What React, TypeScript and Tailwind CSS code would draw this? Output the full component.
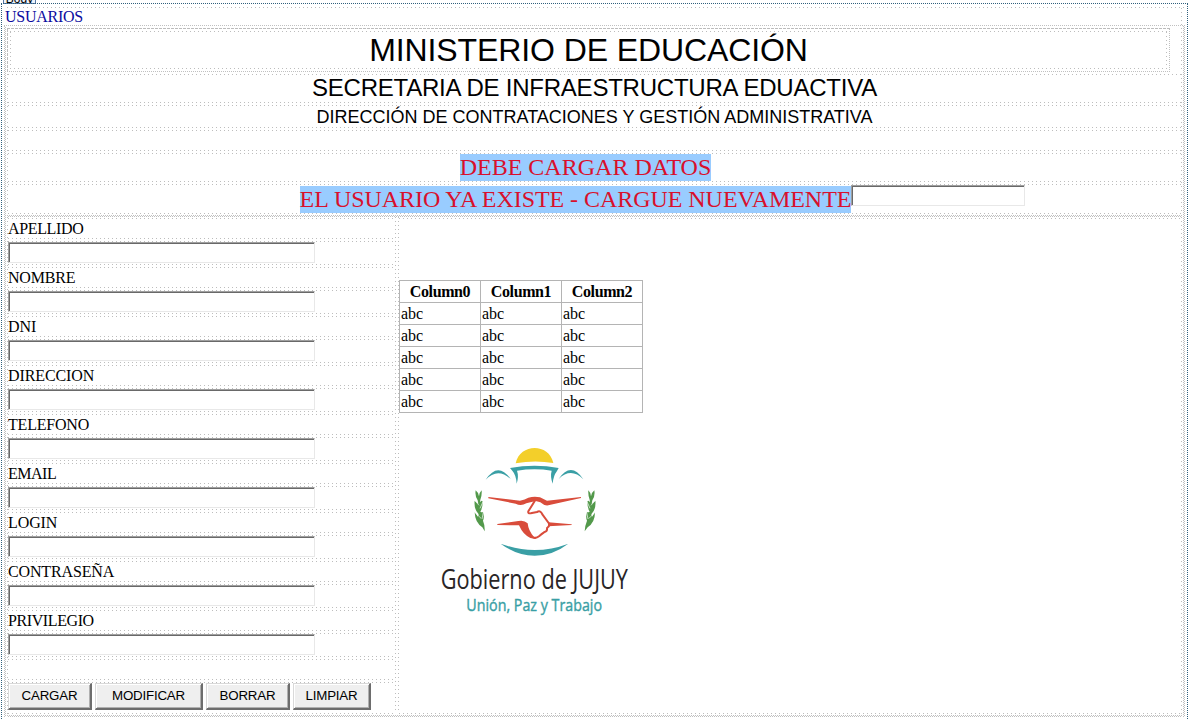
import React from "react";

const H = ({ className = "" }: { className?: string }) => (
  <div className={`h-px shrink-0 bg-[repeating-linear-gradient(90deg,#bdbdbd_0_1px,transparent_1px_4px)] ${className}`} />
);
const HDense = ({ className = "" }: { className?: string }) => (
  <div className={`h-px shrink-0 bg-[repeating-linear-gradient(90deg,#c0c0c0_0_1px,transparent_1px_2px)] ${className}`} />
);
const V = ({ className = "" }: { className?: string }) => (
  <div className={`w-px shrink-0 bg-[repeating-linear-gradient(180deg,#bdbdbd_0_1px,transparent_1px_4px)] ${className}`} />
);
const VDense = ({ className = "" }: { className?: string }) => (
  <div className={`w-px shrink-0 bg-[repeating-linear-gradient(180deg,#c0c0c0_0_1px,transparent_1px_2px)] ${className}`} />
);
const VBlue = () => (
  <div className="w-px shrink-0 bg-[repeating-linear-gradient(180deg,#2f5f7c_0_1px,transparent_1px_2px)]" />
);
const HChecker = () => (
  <div className="shrink-0">
    <HDense />
    <HDense className="ml-px" />
  </div>
);
const VChecker = () => (
  <div className="flex shrink-0">
    <VDense />
    <VDense className="mt-px" />
  </div>
);
const Pair = () => (
  <div className="flex shrink-0 flex-col gap-[2px]">
    <H />
    <H />
  </div>
);

const Field = ({ className = "" }: { className?: string }) => (
  <input
    className={`block shrink-0 border border-t-[#a0a0a0] border-r-[#e8e8e8] border-b-[#e8e8e8] border-l-[#a0a0a0] bg-white shadow-[inset_1px_1px_#696969] outline-none ${className}`}
  />
);

const fields = [
  { label: "APELLIDO", tracking: "tracking-[-0.35px]" },
  { label: "NOMBRE", tracking: "tracking-[-0.2px]" },
  { label: "DNI", tracking: "tracking-[-0.1px]" },
  { label: "DIRECCION", tracking: "tracking-[-0.1px]" },
  { label: "TELEFONO", tracking: "tracking-[-0.2px]" },
  { label: "EMAIL", tracking: "tracking-[-0.5px]" },
  { label: "LOGIN", tracking: "tracking-[-0.1px]" },
  { label: "CONTRASEÑA", tracking: "tracking-[-0.15px]" },
  { label: "PRIVILEGIO", tracking: "tracking-[-0.4px]" },
];
const buttons = [
  { label: "CARGAR", width: "w-[84px]" },
  { label: "MODIFICAR", width: "w-[108px]" },
  { label: "BORRAR", width: "w-[84px]" },
  { label: "LIMPIAR", width: "w-[78px]" },
];

function Logo() {
  return (
    <svg className="mt-[22px] ml-[31px] block" width="210" height="190" viewBox="0 0 630 570">
      <path d="M257 85C270 24 357 24 370 84Q314 74 257 85Z" fill="#f3cf2a" />
      <g fill="#3a9fa5">
        <path d="M240 99Q314 85 386 99L381 108Q370 122 368 146Q360 124 365 107Q314 99 261 107Q267 124 260 146Q258 120 248 109Z" />
        <path d="M167 134Q204 78 242 132Q203 96 167 134Z" />
        <path d="M386 132Q423 78 460 133Q423 96 386 132Z" />
        <path d="M212 326Q314 364 415 326Q368 362 314 362Q260 362 212 326Z" />
      </g>
      <g transform="translate(105 15)">
        <g fill="#d94c3b">
          <path d="M70 171L165 182Q180 179 190 173Q208 168 225 172L246 182L348 171V174L250 196Q238 198 226 187L212 183L184 190Q168 199 152 191L70 175Z" />
          <path d="M97 252L160 243Q177 239 188 250Q190 272 207 291L212 297L196 294Q174 284 162 256L97 255Z" />
          <path d="M250 247L320 253V255L250 259Z" />
        </g>
        <path d="M211 180L190 214Q188 221 197 220L216 216Q227 210 232 223L251 249Q256 258 246 264Q248 274 237 277Q230 282 222 289Q212 297 202 291" fill="none" stroke="#d94c3b" strokeWidth="6" strokeLinejoin="round" />
      </g>
      <g fill="#53994b">
        <path id="leaf-left" d="M137 166Q144 171 147 184Q149 171 155 166Q156 183 151 194L150 202Q155 194 158 200Q158 219 151 230Q156 233 159 231Q164 245 159 257Q165 271 164 289L157 277Q135 263 134 232L144 245L146 238Q131 222 134 197L145 207L143 196Q134 183 137 166Z" />
        <path d="M493 166Q486 171 483 184Q481 171 475 166Q474 183 479 194L480 202Q475 194 472 200Q472 219 479 230Q474 233 471 231Q466 245 471 257Q465 271 464 289L473 277Q495 263 495 232L486 245L484 238Q499 222 496 197L485 207L487 196Q496 183 493 166Z" />
      </g>
      <g fill="none" stroke="#fff" strokeWidth="2">
        <path d="M134 196L147 211M159 200L150 220M134 231L153 250M160 232L156 252" />
        <path d="M496 196L483 211M471 200L480 220M496 231L477 250M470 232L474 252" />
      </g>
      <text x="32" y="462" textLength="562" lengthAdjust="spacingAndGlyphs" fontFamily="Open Sans, Noto Sans, sans-serif" fontSize="80" fill="#292526">Gobierno de JUJUY</text>
      <text x="109" y="528" textLength="407" lengthAdjust="spacingAndGlyphs" fontFamily="Open Sans, Noto Sans, sans-serif" fontSize="50" fill="#3a9fa5" stroke="#3a9fa5" strokeWidth="1.2">Unión, Paz y Trabajo</text>
    </svg>
  );
}

export default function App() {
  return (
    <div className="flex h-[719px] w-[1188px] flex-col overflow-hidden bg-white font-['Liberation_Serif',serif] text-[16px] text-black">
      <div className="flex h-[3px] shrink-0 pl-[3px]">
        <div className="flex h-[4px] w-[33px] shrink-0 items-end justify-center overflow-hidden border-x border-b border-[#5679a5] bg-[#eef3fb] font-['Liberation_Sans',sans-serif] text-[12px] leading-[7px]">
          Body
        </div>
      </div>
      <div className="ml-px h-px shrink-0 bg-[repeating-linear-gradient(90deg,#2f5f7c_0_1px,transparent_1px_2px)]" />
      <div className="flex h-[715px] pl-px">
        <VBlue />
        <div className="mx-[2px] flex w-[1181px] shrink-0 flex-col pt-[3px]">
          <H className="ml-[3px]" />
          <div className="flex h-[17px] shrink-0 justify-between pl-px">
            <span className="leading-[18px] tracking-[-0.25px] text-[#0b0ba0]">USUARIOS</span>
            <V className="mr-[3px]" />
          </div>
          <HDense />
          <div className="flex h-[691px] shrink-0">
            <VChecker />
            <div className="mr-px ml-px flex w-[1175px] shrink-0 flex-col">
              <div className="flex justify-between pt-[2px]">
                <div className="flex h-[44px] w-[1163px] shrink-0 flex-col">
                  <div className="h-px bg-[repeating-linear-gradient(90deg,#bcbcbc_0_3px,transparent_3px_4px)]" />
                  <div className="flex h-[42px]">
                    <div className="w-px bg-[repeating-linear-gradient(180deg,#bcbcbc_0_3px,transparent_3px_4px)]" />
                    <div className="ml-[2px] flex grow flex-col pt-[2px]">
                      <H />
                      <div className="flex h-[36px] justify-between">
                        <V />
                        <h1 className="font-['Liberation_Sans',sans-serif] text-[32px] leading-[37px] tracking-[-0.1px]">MINISTERIO DE EDUCACIÓN</h1>
                        <V />
                      </div>
                      <H />
                    </div>
                    <VDense className="ml-[2px]" />
                  </div>
                  <HDense />
                </div>
                <V />
              </div>
              <div className="flex h-[142px] shrink-0 pt-[2px]">
                <V />
                <div className="flex w-[1173px] flex-col">
                  <H />
                  <div className="h-[27px] text-center font-['Liberation_Sans',sans-serif] text-[24px] leading-[25px] tracking-[-0.23px]">SECRETARIA DE INFRAESTRUCTURA EDUACTIVA</div>
                  <Pair />
                  <div className="h-[21px] text-center font-['Liberation_Sans',sans-serif] text-[18px] leading-[23px]">DIRECCIÓN DE CONTRATACIONES Y GESTIÓN ADMINISTRATIVA</div>
                  <Pair />
                  <div className="h-[19px]" />
                  <Pair />
                  <div className="flex h-[27px] justify-center pr-[18px] text-[24px] leading-[27px] text-[#d8102c]">
                    <span className="bg-[#99ccff]">DEBE CARGAR DATOS</span>
                  </div>
                  <Pair />
                  <div className="flex h-[28px] justify-center pl-[136px] text-[24px] leading-[27px] text-[#d8102c]">
                    <span className="mt-px h-[27px] bg-[#99ccff] tracking-[-0.05px]">EL USUARIO YA EXISTE - CARGUE NUEVAMENTE</span>
                    <Field className="h-[21px] w-[174px]" />
                  </div>
                  <H />
                </div>
                <V />
              </div>
              <div className="h-px shrink-0" />
              <HChecker />
              <div className="flex h-[498px] shrink-0">
                <V />
                <div className="flex w-[387px] shrink-0 flex-col pt-px">
                  <H />
                  {fields.map((f, i) => (
                    <div key={f.label} className="flex shrink-0 flex-col">
                      <div className={`h-[19px] leading-[20px] ${f.tracking}`}>{f.label}</div>
                      <Pair />
                      <Field className="h-[21px] w-[307px]" />
                      <div className="h-px" />
                      <Pair />
                      {i === 8 && <div className="h-[19px]" />}
                    </div>
                  ))}
                  <Pair />
                  <div className="flex gap-[3px]">
                    {buttons.map((b) => (
                      <button
                        key={b.label}
                        className={`h-[27px] shrink-0 border-t border-r-2 border-b-2 border-l border-t-[#d9d9d9] border-r-[#6d6d6d] border-b-[#6d6d6d] border-l-[#d9d9d9] bg-[#efefef] font-['Liberation_Sans',sans-serif] text-[13.33px] leading-[24px] tracking-[-0.2px] shadow-[inset_1px_1px_#fff,inset_-1px_-1px_#b0b0b0] ${b.width}`}
                      >
                        {b.label}
                      </button>
                    ))}
                  </div>
                  <H className="mt-auto mb-px" />
                </div>
                <V className="mb-[2px]" />
                <V className="mb-[2px] ml-[2px]" />
                <div className="flex w-[782px] shrink-0 flex-col">
                  <H className="mt-px" />
                  <table className="mt-[61px] w-[244px] table-fixed border-collapse border border-[#a0a0a0]">
                    <thead>
                      <tr className="h-[22px]">
                        {["Column0", "Column1", "Column2"].map((c) => (
                          <th key={c} className="border border-[#b4b4b4] p-0 text-[16px] leading-[21px] font-bold tracking-[-0.4px]">{c}</th>
                        ))}
                      </tr>
                    </thead>
                    <tbody>
                      {[0, 1, 2, 3, 4].map((r) => (
                        <tr key={r} className="h-[22px]">
                          {[0, 1, 2].map((c) => (
                            <td key={c} className="border border-[#b4b4b4] p-0 pl-px leading-[21px]">abc</td>
                          ))}
                        </tr>
                      ))}
                    </tbody>
                  </table>
                  <Logo />
                  <H className="mt-auto mb-px" />
                </div>
                <V />
              </div>
              <HChecker />
            </div>
            <VChecker />
          </div>
        </div>
        <VBlue />
      </div>
    </div>
  );
}
